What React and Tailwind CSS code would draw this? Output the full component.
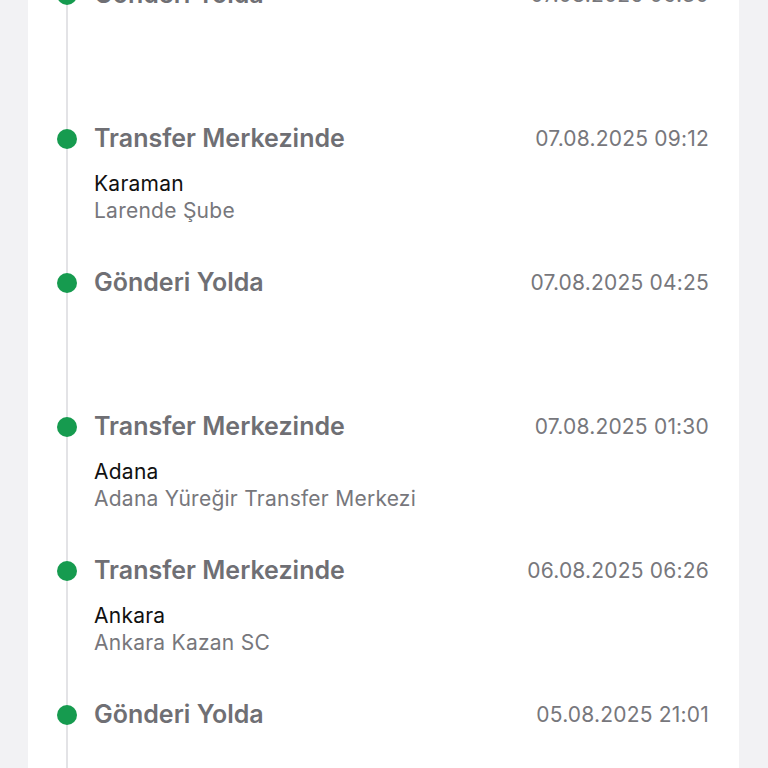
const events = [
  { title: "Gönderi Yolda", date: "07.08.2025 06:30" },
  { title: "Transfer Merkezinde", date: "07.08.2025 09:12", city: "Karaman", branch: "Larende Şube" },
  { title: "Gönderi Yolda", date: "07.08.2025 04:25" },
  { title: "Transfer Merkezinde", date: "07.08.2025 01:30", city: "Adana", branch: "Adana Yüreğir Transfer Merkezi" },
  { title: "Transfer Merkezinde", date: "06.08.2025 06:26", city: "Ankara", branch: "Ankara Kazan SC" },
  { title: "Gönderi Yolda", date: "05.08.2025 21:01" },
];

function TimelineItem({ item }) {
  return (
    <div className="flex h-[144px]">
      <div className="relative w-5 shrink-0">
        <div className="absolute left-[9px] top-0 bottom-0 w-[2px] bg-[#e3e3e6]" />
        <div className="relative mt-[6px] h-5 w-5 rounded-full bg-[#169b4f]" />
      </div>
      <div className="ml-[17px] flex-1">
        <div className="flex h-8 items-center justify-between">
          <span className="text-[25px] font-semibold text-[#6f6f74]">{item.title}</span>
          <span className="text-[21px] tracking-[0.2px] text-[#77777c]">{item.date}</span>
        </div>
        {item.city && (
          <div className="mt-[15px] text-[21px] leading-[27px] tracking-[0.25px]">
            <div className="text-[#111111]">{item.city}</div>
            <div className="text-[#77777c]">{item.branch}</div>
          </div>
        )}
      </div>
    </div>
  );
}

export default function App() {
  return (
    <div className="h-[768px] overflow-hidden bg-[#f2f2f4]" style={{ fontFamily: "Inter, 'Noto Sans', sans-serif" }}>
      <div className="-mt-[21px] ml-[28px] mr-[29px] bg-white pl-[29px] pr-[30px]">
        {events.map((item, i) => (
          <TimelineItem key={i} item={item} />
        ))}
      </div>
    </div>
  );
}
